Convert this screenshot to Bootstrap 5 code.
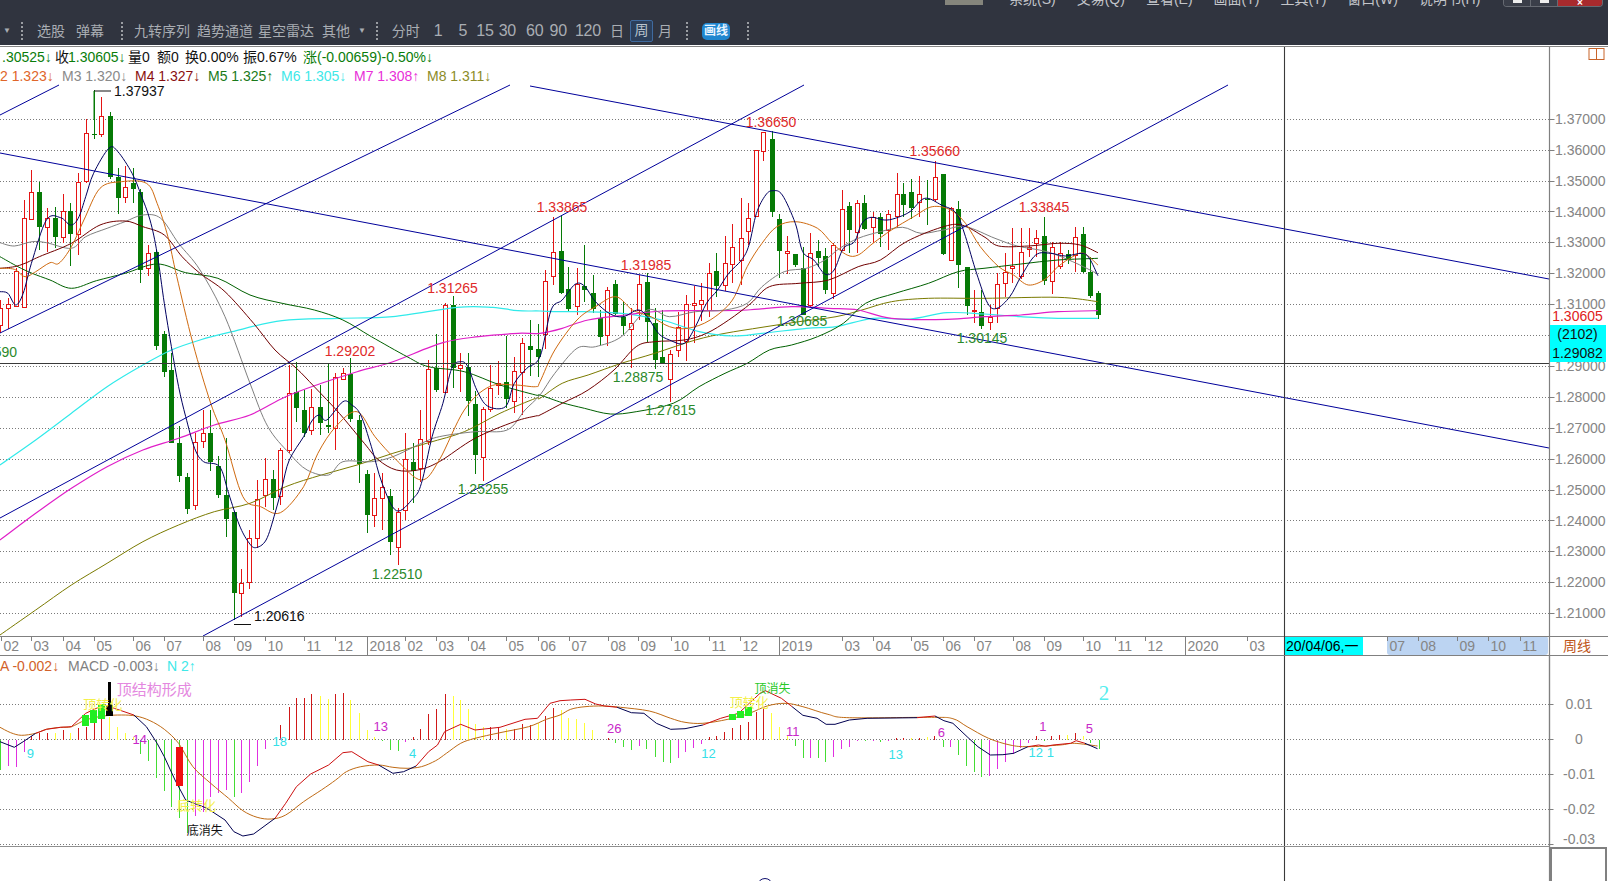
<!DOCTYPE html>
<html lang="zh-CN">
<head>
<meta charset="utf-8">
<title>周线 K线图</title>
<link href="https://cdn.jsdelivr.net/npm/bootstrap@5.3.0/dist/css/bootstrap.min.css" rel="stylesheet">
<style>
html,body{margin:0;height:881px;overflow:hidden;background:#fff;font-family:"Liberation Sans","Noto Sans CJK SC",sans-serif}
.app-header{height:45px;background:#30343f;color:#a9adb3;font-size:14px;line-height:14px;flex:none}
.menu-row{height:7px;overflow:hidden;padding-left:945px}
.vip{width:38px;height:5px;background:#85857c;align-self:flex-start;margin-right:26px}
.menu-item{margin-right:21px;margin-bottom:1px;white-space:nowrap;color:#c3c5ca}
.win{width:100px;height:7px;margin-left:auto;margin-right:5px;border:1px solid #666a72;border-top:0;border-radius:0 0 4px 4px;overflow:hidden;align-self:flex-start}
.win span{display:flex;justify-content:center;flex:none;width:27px;background:#3a3e49;border-right:1px solid #666a72}
.win span i{display:block;width:9px;height:3px;background:#eee}
.win span.close{flex:1;background:#a82a2d;border:0;color:#fff;font-size:10px;line-height:5px;font-weight:700}
.tool-row{height:38px;padding-top:10px;white-space:nowrap}
.sep{width:0;height:18px;border-left:2px dotted #9a9da2;flex:none}
.caret{font-size:8px;color:#a9adb3}
.ml3{margin-left:3px}.ml4{margin-left:4px}.ml5{margin-left:5px}.ml6{margin-left:6px}.ml7{margin-left:7px}.ml8{margin-left:8px}.ml9{margin-left:9px}.ml10{margin-left:10px}.ml11{margin-left:11px}.ml13{margin-left:13px}.ml14{margin-left:14px}.ml15{margin-left:15px}.ml16{margin-left:16px}.ml17{margin-left:17px}
.ti{letter-spacing:0;flex:none}
.num{font-size:16px;letter-spacing:-.2px}
.active-tab{width:23px;height:22px;border:1px solid #3f6a9e;background:#2c3f5a;border-radius:2px;text-align:center;line-height:19px;color:#b9c3cc}
.pill-draw{width:28px;height:17px;background:#1f86cf;color:#e8f4ff;border-radius:5px;font-size:12px;line-height:17px;text-align:center;padding:0}
.rule-white{height:1px;background:#fff;flex:none}
.rule-gray{height:1px;background:#858585;flex:none}
#chart{display:block;width:1608px;height:834px}
#chart text{font-family:"Liberation Sans","Noto Sans CJK SC",sans-serif}
</style>
</head>
<body>
<div class="container-fluid p-0 d-flex flex-column">
  <header class="app-header d-flex flex-column">
    <div class="menu-row d-flex align-items-end">
      <div class="vip"></div>
      <span class="menu-item">系统(S)</span><span class="menu-item">交易(Q)</span><span class="menu-item">查看(E)</span><span class="menu-item">画面(T)</span><span class="menu-item">工具(T)</span><span class="menu-item">窗口(W)</span><span class="menu-item">说明书(H)</span>
      <div class="win d-flex"><span><i></i></span><span><i></i></span><span class="close">×</span></div>
    </div>
    <div class="tool-row d-flex align-items-center">
      <span class="caret ml3">▼</span>
      <span class="sep ml10"></span>
      <span class="ti ml14">选股</span><span class="ti ml11">弹幕</span>
      <span class="sep ml17"></span>
      <span class="ti ml11">九转序列</span><span class="ti ml7">趋势通道</span><span class="ti ml5">星空雷达</span><span class="ti ml8">其他</span>
      <span class="caret ml8">▼</span>
      <span class="sep ml10"></span>
      <span class="ti ml14">分时</span>
      <span class="ti num ml14">1</span><span class="ti num ml16">5</span><span class="ti num ml9">15</span><span class="ti num ml5">30</span><span class="ti num ml10">60</span><span class="ti num ml6">90</span><span class="ti num ml8">120</span>
      <span class="ti ml9">日</span><span class="ti active-tab ml6">周</span><span class="ti ml5">月</span>
      <span class="sep ml14"></span>
      <span class="badge pill-draw ml14">画线</span>
      <span class="sep ml17"></span>
    </div>
  </header>
  <div class="rule-white"></div>
  <div class="rule-gray"></div>
  <main class="position-relative">
    <svg id="chart" viewBox="0 47 1608 834" xmlns="http://www.w3.org/2000/svg"></svg>
  </main>
</div>
<script>
const z3=([x,y])=>[x/2.8,120+y/3], z4=([x,y])=>[540+x/2.703,120+y/3], z6=([x,y])=>[x/2.8,630+y/3], z7=([x,y])=>[560+x/2.8,630+y/3];
const svg=document.getElementById('chart');let out='';
const L=(x1,y1,x2,y2,c,w=1,extra='')=>{out+=`<line x1="${x1}" y1="${y1}" x2="${x2}" y2="${y2}" stroke="${c}" stroke-width="${w}" ${extra}/>`};
const T=(x,y,s,c,a='start',size=14,extra='')=>{out+=`<text x="${x}" y="${y}" fill="${c}" font-size="${size}" text-anchor="${a}" ${extra}>${s}</text>`};
const P=v=>366+(1.29-v)*3090;

// grid
const AX=1549.5;
for(let i=0;i<17;i++){const v=1.37-i*.01,y=Math.round(P(v))+.5;
  L(0,y,AX,y,'#7a7a7a',1,'stroke-dasharray="1 2"');L(AX,y,AX+5,y,'#808080');}
const my=[704.5,739.5,774.5,809.5,844.5];
my.forEach(y=>{L(0,y,AX,y,'#7a7a7a',1,'stroke-dasharray="1 2"');L(AX,y,AX+4,y,'#808080');});

// candles: x, bodyTop, bodyBottom, wickHigh, wickLow, colour (r/g)
const c3=[[0,565,617,540,640,'r'],[22,553,565,535,628,'r'],[44,452,556,445,560,'r'],[66,295,562,240,565,'r'],[88,217,298,150,298,'r'],[110,216,320,185,390,'g'],[132,295,322,265,395,'r'],[153,295,352,262,385,'g'],[175,272,350,222,370,'r'],[197,273,342,250,437,'g'],[219,185,340,160,405,'r'],[240,40,185,-3,190,'r'],[262,41,43,-90,58,'g'],[284,-12,42,-69,52,'r'],[307,-12,172,-24,178,'g'],[329,172,234,145,282,'g'],[349,200,230,138,248,'r'],[372,190,208,145,250,'g'],[393,215,450,208,490,'g'],[415,400,445,375,468,'r'],[437,395,677,390,690,'g'],[458,643,758,632,772,'g'],[480,750,968,700,970,'g'],[502,970,1070,918,1085,'g'],[524,1072,1168,1060,1183,'g'],[545,965,1153,940,1170,'r'],[567,940,963,870,985,'r'],[589,940,1028,870,1052,'g'],[611,1037,1123,1007,1135,'g'],[633,1126,1198,955,1252,'g'],[654,1177,1420,1177,1500,'g'],[676,1390,1420,1348,1490,'r'],[698,1255,1387,1230,1408,'r'],[720,1137,1255,1080,1283,'r'],[742,1078,1125,1015,1160,'r'],[763,1078,1135,1050,1170,'g'],[785,990,1128,985,1155,'r'],[808,820,990,735,1000,'r'],[830,815,862,725,905,'g'],[852,870,940,810,950,'g'],[872,862,932,808,945,'r'],[895,860,908,795,945,'g'],[917,916,922,728,940,'g'],[938,770,922,760,990,'r'],[960,758,775,745,780,'r'],[981,763,898,715,905,'g'],[1004,900,1033,885,1090,'g'],[1027,1063,1187,1050,1238,'g'],[1048,1135,1187,1060,1220,'r'],[1069,1102,1135,1060,1230,'r'],[1091,1127,1265,1108,1305,'g'],[1113,1177,1282,1165,1335,'r'],[1135,1018,1170,938,1200,'r'],[1157,1027,1053,970,1150,'g'],[1177,958,1045,870,1085,'r'],[1199,748,965,720,975,'r'],[1222,745,812,642,815,'g'],[1245,555,817,550,820,'r'],[1267,555,745,528,805,'g'],[1287,735,745,700,815,'r'],[1309,740,842,698,888,'g'],[1331,853,1007,812,1062,'g'],[1353,868,1012,860,1082,'r'],[1373,803,865,735,875,'r'],[1395,790,795,722,825,'r'],[1417,785,835,648,865,'g'],[1440,752,842,712,878,'r'],[1462,670,758,655,885,'r'],[1483,677,688,600,768,'g'],[1505,688,712,612,770,'g'],[1527,482,640,450,688,'r'],[1549,397,470,292,495,'r']];
const c4=[[58,393,520,285,523,'g'],[77,508,567,440,577,'g'],[99,493,558,443,585,'r'],[120,498,510,375,545,'g'],[142,520,567,465,578,'g'],[163,595,652,570,675,'g'],[182,511,647,502,678,'r'],[204,493,582,480,585,'g'],[225,590,618,545,645,'g'],[247,610,628,565,745,'r'],[267,493,570,465,600,'r'],[288,487,607,460,665,'g'],[310,610,722,565,748,'g'],[331,712,730,570,730,'g'],[352,703,778,690,845,'r'],[372,622,690,575,712,'r'],[394,553,665,525,722,'r'],[415,548,553,498,670,'r'],[436,541,553,490,602,'r'],[458,458,570,430,590,'r'],[477,453,497,400,530,'g'],[499,428,495,348,512,'r'],[520,380,430,312,490,'r'],[542,355,422,235,495,'r'],[563,295,335,250,375,'r'],[583,90,287,90,290,'r'],[604,36,92,36,122,'r'],[626,57,275,32,290,'g'],[647,297,392,283,475,'g'],[667,392,397,348,462,'r'],[688,403,435,403,440,'g'],[710,443,585,380,585,'g'],[731,400,555,340,560,'r'],[752,393,415,360,440,'g'],[771,408,510,385,522,'g'],[793,375,518,370,538,'r'],[815,267,390,210,390,'r'],[836,258,330,245,400,'g'],[858,248,335,240,400,'r'],[877,250,327,225,330,'g'],[899,290,320,275,370,'r'],[920,290,342,280,380,'g'],[941,283,330,270,390,'r'],[964,223,288,160,325,'r'],[982,222,254,190,290,'g'],[1004,216,263,178,298,'g'],[1025,223,248,168,290,'r'],[1046,236,240,180,315,'g'],[1067,172,238,122,245,'r'],[1088,162,402,162,405,'g'],[1110,265,420,260,422,'r'],[1131,268,437,243,505,'g'],[1153,442,560,442,585,'g'],[1172,570,573,510,610,'r'],[1193,577,618,510,628,'g'],[1215,592,607,555,630,'r'],[1236,493,565,460,608,'r'],[1257,457,490,398,530,'r'],[1277,438,445,325,490,'r'],[1299,397,470,325,478,'r'],[1321,382,388,325,412,'r'],[1342,355,370,330,410,'r'],[1363,348,483,290,495,'g'],[1383,380,482,365,522,'r'],[1406,400,440,365,448,'r'],[1427,403,417,390,432,'g'],[1447,352,405,322,455,'r'],[1467,342,456,322,460,'g'],[1488,457,528,412,535,'g'],[1509,520,587,513,597,'g']];
function candle(d,z){const [x,t]=z([d[0],d[1]]),[,b]=z([d[0],d[2]]),[,h]=z([d[0],d[3]]),[,l]=z([d[0],d[4]]);
  const cx=Math.round(x)+.5,col=d[5]=='r'?'#e41414':'#067a06';
  L(cx,h,cx,l,col,1,'shape-rendering="crispEdges"');
  if(d[5]=='r')out+=`<rect x="${cx-2}" y="${Math.round(t)+.5}" width="4" height="${Math.max(1,Math.round(b-t))}" fill="#fff" stroke="${col}" shape-rendering="crispEdges"/>`;
  else out+=`<rect x="${cx-2.5}" y="${Math.round(t)}" width="5" height="${Math.max(1,Math.round(b-t))}" fill="${col}" shape-rendering="crispEdges"/>`;}
c3.forEach(d=>candle(d,z3));c4.forEach(d=>candle(d,z4));

// moving averages
function smooth(pts){let d=`M${pts[0][0].toFixed(1)} ${pts[0][1].toFixed(1)}`;
  for(let i=0;i<pts.length-1;i++){const a=pts[Math.max(i-1,0)],b=pts[i],c=pts[i+1],e=pts[Math.min(i+2,pts.length-1)];
    d+=`C${(b[0]+(c[0]-a[0])/6).toFixed(1)} ${(b[1]+(c[1]-a[1])/6).toFixed(1)} ${(c[0]-(e[0]-b[0])/6).toFixed(1)} ${(c[1]-(e[1]-b[1])/6).toFixed(1)} ${c[0].toFixed(1)} ${c[1].toFixed(1)}`;}
  return d;}
function merge(a,b){return a.map(z3).filter(p=>p[0]<540).concat(b.map(z4));}
const MA=[
['#7a7a00',[[0,1545],[100,1470],[200,1395],[300,1330],[400,1265],[500,1215],[600,1175],[700,1150],[800,1100],[900,1065],[1000,1035],[1100,1000],[1200,968],[1300,935],[1400,880],[1500,835]],[[0,835],[60,790],[130,765],[220,730],[310,700],[420,660],[500,640],[600,622],[700,605],[800,590],[870,570],[950,545],[1050,535],[1200,535],[1400,532],[1508,545]]],
['#30eaea',[[0,1035],[100,960],[200,880],[300,800],[400,735],[480,690],[560,660],[650,635],[790,602],[950,595],[1100,590],[1280,562],[1380,562],[1450,572]],[[0,573],[50,575],[120,575],[220,580],[330,600],[430,635],[520,648],[600,640],[720,625],[800,620],[900,595],[1000,597],[1100,578],[1200,582],[1300,590],[1400,595],[1508,595]]],
['#e01fc8',[[0,1260],[100,1180],[200,1105],[300,1040],[400,990],[500,955],[600,915],[700,885],[800,830],[900,790],[1000,755],[1100,725],[1240,668],[1340,650],[1450,640]],[[0,640],[60,625],[130,600],[230,585],[330,573],[450,572],[560,570],[680,560],[780,565],[860,570],[950,595],[1100,598],[1200,590],[1300,585],[1400,575],[1508,572]]],
['#006000',[[0,410],[50,440],[90,460],[140,480],[200,505],[270,482],[350,460],[440,432],[520,458],[610,475],[700,525],[790,550],[880,570],[960,600],[1040,650],[1140,710],[1200,740],[1300,755],[1400,795],[1500,825]],[[0,825],[60,848],[120,865],[190,882],[260,875],[360,850],[430,800],[500,760],[560,730],[620,690],[680,675],[750,650],[820,610],[880,550],[960,520],[1050,490],[1130,455],[1200,445],[1300,432],[1400,420],[1508,415]]],
['#808080',[[0,368],[40,378],[90,365],[130,368],[200,385],[240,350],[300,325],[350,305],[400,285],[450,295],[500,370],[560,450],[630,590],[700,790],[750,920],[810,1000],[860,1050],[920,1065],[960,1025],[1040,1025],[1100,1010],[1180,970],[1230,950],[1330,935],[1420,930],[1470,870]],[[0,825],[40,760],[100,685],[150,680],[220,650],[290,570],[350,590],[420,575],[500,570],[560,550],[600,500],[660,455],[720,445],[770,420],[810,385],[860,355],[920,335],[980,322],[1030,340],[1090,330],[1150,320],[1230,355],[1290,378],[1370,395],[1440,425],[1508,462]]],
['#700000',[[0,445],[40,440],[70,430],[110,410],[200,370],[280,315],[350,303],[400,320],[460,345],[510,410],[560,460],[630,515],[710,610],[770,690],[830,745],[880,800],[950,880],[1020,970],[1060,1020],[1110,1050],[1170,1050],[1230,1025],[1330,955],[1440,905],[1500,888]],[[0,885],[60,850],[130,810],[200,750],[260,680],[310,665],[390,660],[450,640],[510,600],[570,550],[620,500],[700,490],[780,480],[860,440],[920,420],[990,365],[1085,322],[1140,315],[1200,350],[1240,378],[1320,378],[1400,370],[1460,375],[1508,398]]],
['#cf6a10',[[0,445],[40,448],[70,470],[100,455],[140,428],[165,430],[200,380],[235,300],[280,205],[340,185],[410,190],[440,250],[470,350],[495,470],[540,670],[590,850],[630,960],[680,1130],[730,1160],[785,1178],[850,1100],[890,1000],[940,920],[1000,875],[1050,950],[1110,1020],[1180,1080],[1230,1020],[1300,870],[1370,800],[1440,795],[1500,800]],[[0,785],[40,690],[100,600],[150,560],[205,530],[250,570],[300,590],[350,620],[400,625],[460,600],[520,540],[560,440],[600,370],[640,320],[690,305],[750,325],[790,370],[830,405],[860,405],[900,370],[950,330],[1010,290],[1060,260],[1110,270],[1150,310],[1190,380],[1240,440],[1280,465],[1320,495],[1365,478],[1400,440],[1440,410],[1470,400],[1508,435]]],
['#000060',[[0,515],[22,520],[44,555],[65,520],[88,430],[130,300],[170,293],[197,315],[219,295],[240,230],[262,160],[305,85],[330,95],[370,160],[395,225],[420,300],[440,400],[460,550],[480,680],[500,800],[520,890],[545,985],[570,1025],[615,1040],[640,1120],[670,1215],[695,1265],[715,1283],[745,1260],[770,1180],[790,1100],[810,1020],[850,950],[875,900],[895,885],[915,900],[960,845],[985,855],[1010,885],[1040,980],[1070,1090],[1110,1172],[1157,1135],[1180,1090],[1210,950],[1240,850],[1265,745],[1290,725],[1310,740],[1335,810],[1365,858],[1415,860],[1440,790],[1475,745]],[[0,710],[30,570],[60,540],[95,493],[120,498],[150,545],[190,582],[225,590],[265,570],[290,590],[320,640],[350,660],[390,670],[420,620],[450,550],[480,510],[510,460],[545,420],[565,375],[585,280],[610,225],[630,212],[655,225],[690,310],[710,395],[740,420],[770,462],[795,450],[820,385],[850,365],[870,310],[895,292],[930,300],[960,295],[1000,275],[1040,235],[1085,255],[1125,280],[1150,350],[1180,460],[1210,550],[1235,565],[1270,530],[1300,470],[1340,405],[1380,400],[1420,408],[1465,400],[1485,415],[1508,467]]]
];
MA.forEach(([c,a,b])=>{out+=`<path d="${smooth(merge(a,b))}" fill="none" stroke="${c}" stroke-width="${c=='#30eaea'||c=='#e01fc8'?1.2:1}"/>`;});

// channel lines
[[0,115,59,85],[0,333,510,85],[0,518,804,85],[203,636,1228,85],[530,86,1549,279],[0,153,1549,448]].forEach(l=>L(l[0],l[1],l[2],l[3],'#00009a',1));

// crosshair and frame
L(0,363.5,AX,363.5,'#3a3a3a',1.1);
L(1284.5,47,1284.5,881,'#3a3a3a',1.1);
L(AX,47,AX,847,'#808080',1.2);
// price-axis labels
for(let i=0;i<17;i++){const v=1.37-i*.01;T(1555,P(v)+5,v.toFixed(5),'#858585');}
out+=`<rect x="1550" y="325" width="56" height="37" fill="#00ffff"/>`;
T(1577.5,339,'(2102)','#111','middle');T(1577.5,358,'1.29082','#111','middle');
out+=`<rect x="1552" y="310" width="54" height="15" fill="#fff"/>`;
T(1577.5,321,'1.30605','#e02020','middle');
out+=`<rect x="1589" y="48.5" width="15" height="11" fill="none" stroke="#c8642a"/>`;L(1596.5,48,1596.5,60,'#c8642a');

// x axis
out+=`<rect x="0" y="636" width="1608" height="19" fill="#fff"/>`;
out+=`<rect x="1387" y="636" width="161" height="19" rx="3" fill="#bcd4f2"/>`;
out+=`<rect x="1285" y="636" width="78" height="19" fill="#00ffff"/>`;
L(0,636.5,1608,636.5,'#808080');L(0,655.5,1608,655.5,'#808080');
const xt=[[3,'02'],[88,'03'],[175,'04'],[262,'05'],[371,'06'],[458,'07'],[568,'08'],[654,'09'],[743,'10'],[852,'11'],[939,'12'],[1027,'2018',1],[1135,'02'],[1222,'03'],[1309,'04'],[1418,'05'],[1505,'06']].map(a=>[a[0]/2.8,a[1],a[2]]).concat(
 [[25,'07'],[133,'08'],[219,'09'],[310,'10'],[418,'11'],[505,'12'],[614,'2019',1],[789,'03'],[876,'04'],[984,'05'],[1072,'06'],[1158,'07'],[1268,'08'],[1356,'09'],[1464,'10']].map(a=>[560+a[0]/2.8,a[1],a[2]]),
 [[44,'11'],[135,'12'],[254,'2020',1],[440,'03'],[860,'07'],[952,'08'],[1070,'09'],[1162,'10'],[1258,'11']].map(a=>[1100+a[0]/2.994,a[1],a[2]]));
xt.forEach(([x,s,y])=>{const X=Math.round(x)+.5;L(X,636,X,y?655:641,'#808080');T(X+2,651,s,'#858585');});
T(1286,651,'20/04/06,一','#000');
L(1284.5,636,1284.5,655,'#3a3a3a',1.1);L(AX,636,AX,881,'#808080',1.2);
T(1577,651,'周线','#c0561a','middle');

// price labels
[[771,127,'1.36650','r'],[934.7,156,'1.35660','r'],[562,212,'1.33865','r'],[1044,212,'1.33845','r'],[646,270,'1.31985','r'],[452.5,293,'1.31265','r'],[350,356,'1.29202','r'],[802,326,'1.30685','g'],[982,343,'1.30145','g'],[638,382,'1.28875','g'],[670.6,415,'1.27815','g'],[483,494,'1.25255','g'],[397,579,'1.22510','g']].forEach(([x,y,s,c])=>T(x,y,s,c=='r'?'#e02a2a':'#2b8a2b','middle',14));
T(17,357,'590','#2b8a2b','end');
L(94,91,111,91,'#111');T(114,96,'1.37937','#111');
L(234,624.5,251,624.5,'#111');T(254,621,'1.20616','#111');
L(94,91,94,120,'#067a06');

// legends
function seq(y,items,size=14){items.forEach(([x,s,c])=>T(x,y,s,c,'start',size));}
seq(62,[[2,'.30525↓','#0a7d0a'],[55,'收','#111'],[68,'1.30605↓','#0a7d0a'],[128,'量0','#111'],[157,'额0','#111'],[185,'换0.00%','#111'],[243,'振0.67%','#111'],[303,'涨(-0.00659)-0.50%↓','#0a7d0a']]);
seq(81,[[0,'2 1.323↓','#e0662a'],[62,'M3 1.320↓','#8a8a8a'],[135,'M4 1.327↓','#8a1010'],[208,'M5 1.325↑','#1a7a1a'],[281,'M6 1.305↓','#40e8e8'],[354,'M7 1.308↑','#e830d8'],[427,'M8 1.311↓','#8c8c28']]);
T(0,671,'A -0.002↓','#d2622a');T(68,671,'MACD -0.003↓','#808080');T(167,671,'N 2↑','#40e8e8');

// MACD axis
[[704,'0.01'],[739,'0'],[774,'-0.01'],[809,'-0.02'],[839,'-0.03']].forEach(([y,s])=>T(1579,y+5,s,'#858585','middle'));

// MACD bars: x, tip, colour
const C={r:'#d01818',y:'#ffff3a',g:'#44dd33',m:'#e030e0'};
const b6=[[0,420,'g'],[22,408,'m'],[44,410,'m'],[66,365,'m'],[88,318,'r'],[110,310,'r'],[132,310,'r'],[153,308,'y'],[175,300,'r'],[197,310,'y'],[219,293,'r'],[240,290,'r'],[262,280,'r'],[284,265,'r'],[306,260,'y'],[328,290,'y'],[349,308,'y'],[372,322,'y'],[393,372,'g'],[415,393,'g'],[437,443,'g'],[458,483,'g'],[480,530,'g'],[502,563,'g'],[524,610,'g'],[545,558,'m'],[567,545,'m'],[589,500,'m'],[611,490,'m'],[633,480,'m'],[654,500,'g'],[676,490,'m'],[698,456,'m'],[720,408,'m'],[742,358,'m'],[785,285,'r'],[808,232,'r'],[830,204,'r'],[852,204,'r'],[872,192,'r'],[895,198,'y'],[917,206,'y'],[938,192,'r'],[960,189,'r'],[981,210,'y'],[1004,248,'y'],[1027,300,'y'],[1048,320,'y'],[1069,332,'g'],[1091,360,'g'],[1113,363,'g'],[1135,335,'m'],[1157,320,'r'],[1177,297,'r'],[1199,252,'r'],[1222,237,'r'],[1245,192,'r'],[1267,198,'y'],[1287,210,'y'],[1309,237,'y'],[1331,283,'y'],[1353,290,'y'],[1373,292,'r'],[1395,290,'r'],[1417,298,'y'],[1440,298,'r'],[1462,282,'r'],[1483,285,'r'],[1505,280,'y'],[1527,258,'r'],[1549,233,'r']];
const b7=[[3,240,'y'],[23,263,'y'],[45,268,'y'],[68,278,'y'],[90,300,'y'],[133,325,'r'],[155,338,'g'],[177,350,'g'],[199,360,'g'],[220,348,'m'],[242,357,'g'],[265,380,'g'],[287,395,'g'],[309,398,'g'],[329,385,'m'],[351,365,'m'],[373,355,'m'],[395,342,'m'],[417,320,'r'],[438,318,'r'],[460,305,'r'],[482,293,'r'],[505,285,'r'],[527,275,'r'],[548,245,'r'],[569,235,'r'],[591,248,'y'],[613,290,'y'],[635,318,'y'],[657,347,'g'],[679,385,'g'],[701,383,'m'],[723,383,'g'],[743,395,'g'],[765,380,'m'],[787,356,'m'],[809,350,'m'],[831,332,'m'],[853,334,'g'],[875,332,'m'],[897,337,'g'],[919,334,'m'],[941,324,'r'],[961,324,'r'],[983,325,'y'],[1005,324,'r'],[1027,322,'y'],[1048,318,'r'],[1071,350,'g'],[1093,350,'m'],[1115,375,'g'],[1138,407,'g'],[1158,425,'g'],[1180,440,'g'],[1202,437,'m'],[1224,418,'m'],[1247,395,'m'],[1269,372,'m'],[1289,355,'m'],[1311,340,'m'],[1334,318,'r'],[1356,333,'g'],[1376,318,'r'],[1398,316,'r'],[1419,316,'y'],[1443,308,'r'],[1465,318,'y'],[1485,340,'g'],[1508,356,'g']];
function bar(d,z){const [x,y]=z([d[0],d[1]]);const X=Math.round(x)+.5;L(X,739.5,X,y,C[d[2]],1.2,'shape-rendering="crispEdges"');}
b6.forEach(d=>bar(d,z6));b7.forEach(d=>bar(d,z7));

// MACD lines
const dea=[[0,292],[30,308],[60,316],[100,310],[130,298],[170,292],[200,290],[240,270],[290,258],[340,255],[380,258],[420,272],[460,298],[500,340],[540,410],[590,460],[640,505],[680,542],[720,562],[760,567],[800,555],[850,515],[900,480],[940,450],[970,425],[1010,410],[1060,405],[1100,412],[1140,415],[1180,410],[1220,392],[1250,370],[1290,340],[1330,325],[1400,308],[1480,290],[1530,268]].map(z6).concat([[0,255],[30,238],[70,230],[120,228],[170,232],[250,243],[310,265],[350,277],[400,280],[470,268],[530,250],[580,228],[630,220],[680,230],[750,253],[810,263],[1040,262],[1100,266],[1140,290],[1200,325],[1260,345],[1310,350],[1400,345],[1440,340],[1505,348]].map(z7));
const dif=[[0,335],[40,352],[65,335],[100,310],[130,298],[170,292],[200,290],[240,250],[290,225],[320,235],[375,255],[410,290],[440,340],[460,380],[490,450],[520,510],[580,535],[630,570],[655,605],[680,618],[710,612],[770,565],[800,520],[830,470],[870,432],[920,405],[960,368],[985,365],[1030,395],[1060,405],[1100,430],[1130,425],[1165,408],[1200,365],[1225,345],[1245,305],[1290,283],[1330,300],[1400,292],[1470,268],[1505,265],[1540,220]].map(z6).concat([[0,212],[30,210],[70,208],[100,222],[125,228],[160,232],[200,248],[235,250],[270,280],[310,298],[350,296],[400,285],[450,265],[500,250],[560,190],[575,182],[620,205],[650,230],[680,256],[720,265],[745,283],[770,283],[810,270],[860,265],[1000,263],[1050,258],[1075,272],[1100,280],[1140,320],[1170,350],[1205,375],[1240,374],[1270,370],[1310,350],[1340,345],[1360,349],[1380,345],[1430,340],[1445,332],[1470,340],[1505,356]].map(z7));
function deaAt(x){for(let i=0;i<dea.length-1;i++){const a=dea[i],b=dea[i+1];if(x>=a[0]&&x<=b[0])return a[1]+(b[1]-a[1])*(x-a[0])/(b[0]-a[0]);}return dea[dea.length-1][1];}
out+=`<path d="${smooth(dea)}" fill="none" stroke="#bf6a14" stroke-width="1"/>`;
for(let i=0;i<dif.length-1;i++){const a=dif[i],b=dif[i+1],m=(a[1]+b[1])/2,col=m<deaAt((a[0]+b[0])/2)+.3?'#cc1010':'#000050';L(a[0].toFixed(1),a[1].toFixed(1),b[0].toFixed(1),b[1].toFixed(1),col,1);}

// MACD signal blocks
const Bx=(x,a,b,w,c,z)=>{const [X,T1]=z([x,a]),[,B1]=z([x,b]);out+=`<rect x="${Math.round(X-w/2)}" y="${Math.round(T1)}" width="${w}" height="${Math.round(B1-T1)}" fill="${c}"/>`;};
Bx(239,255,288,7,'#22ee22',z6);Bx(262,240,278,7,'#22ee22',z6);Bx(284,222,268,7,'#22ee22',z6);
L(109.5,682,109.5,706,'#000',3);Bx(306,226,260,7,'#000',z6);Bx(502,350,468,7,'#f01010',z6);
Bx(482,253,270,7,'#22ee22',z7);Bx(505,243,263,7,'#22ee22',z7);Bx(528,232,258,7,'#22ee22',z7);

// MACD notes
const N6=(x,y,s,c,a='middle',size=13)=>{const [X,Y]=z6([x,y]);T(X,Y+size*.38,s,c,a,size)},N7=(x,y,s,c,a='middle',size=13)=>{const [X,Y]=z7([x,y]);T(X,Y+size*.38,s,c,a,size)};
N6(432,178,'顶结构形成','#e488e0','middle',15);N6(288,222,'顶转化','#f4f04a','middle',13);N6(550,525,'底转化','#f4f04a','middle',13);N6(573,600,'底消失','#111','middle',12);
N6(391,328,'14','#c828c8');N6(85,368,'9','#35dfe8');N6(783,333,'18','#35dfe8');N6(1066,288,'13','#c828c8');N6(1155,370,'4','#35dfe8');
N7(152,294,'26','#c828c8');N7(416,370,'12','#35dfe8');N7(652,304,'11','#c828c8');N7(940,372,'13','#35dfe8');N7(1068,306,'6','#c828c8');N7(1332,366,'12','#35dfe8');N7(1373,366,'1','#35dfe8');N7(1352,289,'1','#c828c8');N7(1482,294,'5','#c828c8');
N7(595,175,'顶消失','#28c828','middle',12);N7(530,217,'顶转化','#f4f04a');
T(1104,700,'2','#55eeee','middle',21,'style="font-family:\'Liberation Serif\',serif"');

// bottom frame
L(0,846.5,AX,846.5,'#909090',1.2);
out+=`<rect x="1551" y="848" width="55" height="40" fill="#fff" stroke="#808080" stroke-width="2"/>`;
out+=`<circle cx="765" cy="886" r="7.5" fill="none" stroke="#10106e"/>`;
svg.innerHTML=out;
</script>
<script src="https://cdn.jsdelivr.net/npm/bootstrap@5.3.0/dist/js/bootstrap.bundle.min.js"></script>
</body>
</html>
